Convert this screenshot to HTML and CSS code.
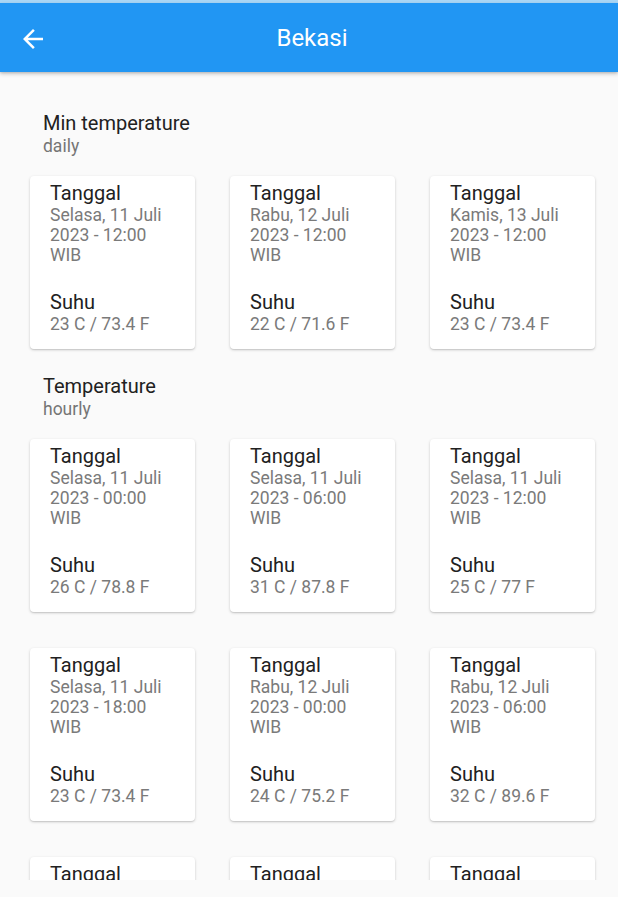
FILE: index.html
```html
<!DOCTYPE html>
<html>
<head>
<meta charset="utf-8">
<link rel="stylesheet" href="styles.css">
</head>
<body>
<div class="statusbar"></div>
<header class="appbar">
  <button class="back" aria-label="Back">
    <svg viewBox="0 0 24 24" width="30" height="30"><path fill="#fff" d="M20 11H7.83l5.59-5.59L12 4l-8 8 8 8 1.41-1.41L7.83 13H20v-2z"/></svg>
  </button>
  <h1 class="title">Bekasi</h1>
</header>
<main class="content">
  <section class="section">
    <div class="section-head">
      <div class="section-title">Min temperature</div>
      <div class="section-sub">daily</div>
    </div>
    <div class="grid">
      <div class="card"><div class="label">Tanggal</div><div class="value">Selasa, 11 Juli<br>2023 - 12:00<br>WIB</div><div class="label gap">Suhu</div><div class="value">23 C / 73.4 F</div></div>
      <div class="card"><div class="label">Tanggal</div><div class="value">Rabu, 12 Juli<br>2023 - 12:00<br>WIB</div><div class="label gap">Suhu</div><div class="value">22 C / 71.6 F</div></div>
      <div class="card"><div class="label">Tanggal</div><div class="value">Kamis, 13 Juli<br>2023 - 12:00<br>WIB</div><div class="label gap">Suhu</div><div class="value">23 C / 73.4 F</div></div>
    </div>
  </section>
  <section class="section">
    <div class="section-head">
      <div class="section-title">Temperature</div>
      <div class="section-sub">hourly</div>
    </div>
    <div class="grid">
      <div class="card"><div class="label">Tanggal</div><div class="value">Selasa, 11 Juli<br>2023 - 00:00<br>WIB</div><div class="label gap">Suhu</div><div class="value">26 C / 78.8 F</div></div>
      <div class="card"><div class="label">Tanggal</div><div class="value">Selasa, 11 Juli<br>2023 - 06:00<br>WIB</div><div class="label gap">Suhu</div><div class="value">31 C / 87.8 F</div></div>
      <div class="card"><div class="label">Tanggal</div><div class="value">Selasa, 11 Juli<br>2023 - 12:00<br>WIB</div><div class="label gap">Suhu</div><div class="value">25 C / 77 F</div></div>
      <div class="card"><div class="label">Tanggal</div><div class="value">Selasa, 11 Juli<br>2023 - 18:00<br>WIB</div><div class="label gap">Suhu</div><div class="value">23 C / 73.4 F</div></div>
      <div class="card"><div class="label">Tanggal</div><div class="value">Rabu, 12 Juli<br>2023 - 00:00<br>WIB</div><div class="label gap">Suhu</div><div class="value">24 C / 75.2 F</div></div>
      <div class="card"><div class="label">Tanggal</div><div class="value">Rabu, 12 Juli<br>2023 - 06:00<br>WIB</div><div class="label gap">Suhu</div><div class="value">32 C / 89.6 F</div></div>
      <div class="card"><div class="label">Tanggal</div><div class="value">Rabu, 12 Juli<br>2023 - 12:00<br>WIB</div><div class="label gap">Suhu</div><div class="value">25 C / 77 F</div></div>
      <div class="card"><div class="label">Tanggal</div><div class="value">Rabu, 12 Juli<br>2023 - 18:00<br>WIB</div><div class="label gap">Suhu</div><div class="value">24 C / 75.2 F</div></div>
      <div class="card"><div class="label">Tanggal</div><div class="value">Kamis, 13 Juli<br>2023 - 00:00<br>WIB</div><div class="label gap">Suhu</div><div class="value">23 C / 73.4 F</div></div>
    </div>
  </section>
</main>
</body>
</html>
```
FILE: styles.css
```css
* { box-sizing: border-box; }
html, body {
  margin: 0;
  padding: 0;
  background: #fafafa;
  font-family: Roboto, "Noto Sans", sans-serif;
  width: 618px;
  height: 897px;
  overflow: hidden;
}
.statusbar {
  height: 3px;
  background: #a9d6f5;
}
.appbar {
  position: relative;
  height: 69px;
  background: #2196f3;
  display: flex;
  align-items: center;
  justify-content: center;
  box-shadow: 0 2px 4px rgba(0,0,0,0.2), 0 1px 2px rgba(0,0,0,0.1);
  z-index: 1;
}
.back {
  position: absolute;
  left: 18px;
  top: 21px;
  width: 30px;
  height: 30px;
  padding: 0;
  border: 0;
  background: none;
  display: flex;
}
.title {
  margin: 0;
  color: #fff;
  font-size: 24px;
  font-weight: 400;
  line-height: 28px;
  padding-left: 6px;
}
.content {
  height: 808px;
  overflow: hidden;
  padding-top: 39px;
}
.section-head {
  padding-left: 43px;
}
.section-title {
  font-size: 20px;
  line-height: 24px;
  color: #212121;
}
.section-sub {
  font-size: 17.5px;
  line-height: 22px;
  color: #757575;
}
.grid {
  display: grid;
  grid-template-columns: repeat(3, 165px);
  column-gap: 35px;
  row-gap: 36px;
  padding: 19px 0 25px 30px;
}
.card {
  background: #fff;
  border-radius: 4px;
  box-shadow: 0 1px 3px rgba(0,0,0,0.18), 0 1px 1px rgba(0,0,0,0.08);
  padding: 5px 10px 16px 20px;
  height: 173px;
}
.label {
  font-size: 20px;
  line-height: 24px;
  color: #212121;
}
.label.gap {
  margin-top: 25px;
}
.value {
  font-size: 17.5px;
  line-height: 20px;
  color: #7a7a7a;
}
```
